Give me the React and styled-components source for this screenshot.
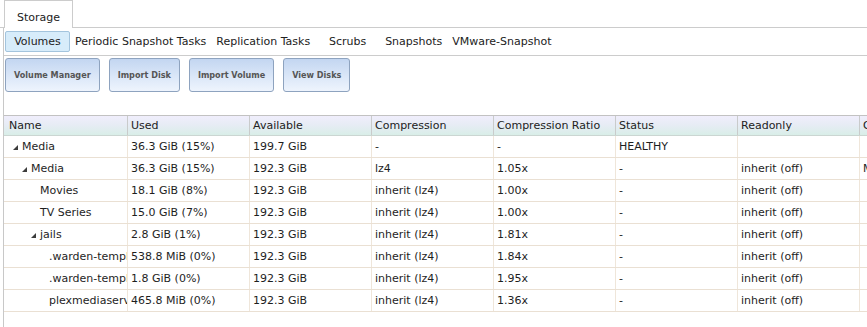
import React from "react";
import styled, { createGlobalStyle, css } from "styled-components";

const Global = createGlobalStyle`
  html, body { margin: 0; padding: 0; background: #ffffff; }
  body { font-family: "DejaVu Sans", Verdana, sans-serif; font-size: 11px; color: #222; }
  * { box-sizing: border-box; }
`;

const Page = styled.div`
  height: 100vh;
  display: flex;
  flex-direction: column;
  overflow: hidden;
`;

const TopBar = styled.div`
  height: 28px;
  display: flex;
  align-items: flex-end;
  padding-left: 4px;
  border-bottom: 1px solid #cccccc;
`;

const TopTab = styled.div`
  width: 69px;
  height: 28px;
  margin-bottom: -1px;
  padding-top: 7px;
  line-height: 20px;
  text-align: center;
  background: #ffffff;
  border: 1px solid #cccccc;
  border-bottom: none;
  color: #222;
`;

const Pane = styled.div`
  flex: 1;
  margin-left: 3px;
  border-left: 1px solid #c8c8c8;
  display: flex;
  flex-direction: column;
`;

const SubTabs = styled.div`
  height: 28px;
  display: flex;
  align-items: center;
  padding-left: 1px;
  border-bottom: 1px solid #cccccc;
`;

const SubTab = styled.div`
  min-width: 65px;
  height: 21px;
  padding: 0 4px;
  line-height: 19px;
  text-align: center;
  white-space: nowrap;
  color: #222;
  border: 1px solid transparent;
  border-radius: 2px;
  ${(p) =>
    p.$active &&
    css`
      background: #d7ecfa;
      border-color: #a3c4dd;
    `}
`;

const Toolbar = styled.div`
  display: flex;
  gap: 9px;
  padding: 2px 0 0 1px;
`;

const ActionButton = styled.button`
  height: 34px;
  padding: 0 8px;
  border: 1px solid #8ea3bf;
  border-radius: 3px;
  background: linear-gradient(to bottom, #c3d6f1 0%, #dbe7f8 55%, #eef4fd 100%);
  font-family: "DejaVu Sans Condensed", "DejaVu Sans", sans-serif;
  font-weight: bold;
  font-size: 9px;
  color: #555;
  white-space: nowrap;
`;

const GridArea = styled.div`
  flex: 1;
  padding-top: 23px;
`;

const COLS = "124px repeat(7, 122px)";

const HeaderRow = styled.div`
  display: grid;
  grid-template-columns: ${COLS};
  height: 21px;
  border-top: 1px solid #c2c2c2;
  border-bottom: 1px solid #cbd6d2;
  background: linear-gradient(to bottom, #f0eefc 0%, #e6ecf4 50%, #d9eee8 100%);
`;

const HeaderCell = styled.div`
  padding: 0 0 0 ${(p) => (p.$first ? 5 : 3)}px;
  line-height: 19px;
  border-right: 1px solid #c9cbcb;
  white-space: nowrap;
  overflow: hidden;
  color: #222;
`;

const DataRow = styled.div`
  display: grid;
  grid-template-columns: ${COLS};
  height: 22px;
  border-bottom: 1px solid #eae0d3;
`;

const Cell = styled.div`
  padding-left: 3px;
  line-height: 21px;
  border-right: 1px solid #efe6da;
  white-space: nowrap;
  overflow: hidden;
  color: #1e1e1e;
`;

const NameCell = styled(Cell)`
  display: flex;
  align-items: center;
  padding-left: ${(p) => 9 + p.$level * 9}px;
`;

const Expander = styled.span`
  width: 9px;
  flex-shrink: 0;
  display: flex;
  align-items: center;
  padding-top: 1px;
`;

const Triangle = () => (
  <svg width="5" height="5" viewBox="0 0 5 5">
    <polygon points="5,0 5,5 0,5" fill="#3c3c3c" />
  </svg>
);

const subTabs = [
  "Volumes",
  "Periodic Snapshot Tasks",
  "Replication Tasks",
  "Scrubs",
  "Snapshots",
  "VMware-Snapshot",
];

const buttons = ["Volume Manager", "Import Disk", "Import Volume", "View Disks"];

const headers = [
  "Name",
  "Used",
  "Available",
  "Compression",
  "Compression Ratio",
  "Status",
  "Readonly",
  "Comments",
];

const rows = [
  { level: 0, exp: true, name: "Media", used: "36.3 GiB (15%)", avail: "199.7 GiB", comp: "-", ratio: "-", status: "HEALTHY", ro: "", extra: "" },
  { level: 1, exp: true, name: "Media", used: "36.3 GiB (15%)", avail: "192.3 GiB", comp: "lz4", ratio: "1.05x", status: "-", ro: "inherit (off)", extra: "Media" },
  { level: 2, name: "Movies", used: "18.1 GiB (8%)", avail: "192.3 GiB", comp: "inherit (lz4)", ratio: "1.00x", status: "-", ro: "inherit (off)", extra: "" },
  { level: 2, name: "TV Series", used: "15.0 GiB (7%)", avail: "192.3 GiB", comp: "inherit (lz4)", ratio: "1.00x", status: "-", ro: "inherit (off)", extra: "" },
  { level: 2, exp: true, name: "jails", used: "2.8 GiB (1%)", avail: "192.3 GiB", comp: "inherit (lz4)", ratio: "1.81x", status: "-", ro: "inherit (off)", extra: "" },
  { level: 3, name: ".warden-template-pluginjail", used: "538.8 MiB (0%)", avail: "192.3 GiB", comp: "inherit (lz4)", ratio: "1.84x", status: "-", ro: "inherit (off)", extra: "" },
  { level: 3, name: ".warden-template-standard", used: "1.8 GiB (0%)", avail: "192.3 GiB", comp: "inherit (lz4)", ratio: "1.95x", status: "-", ro: "inherit (off)", extra: "" },
  { level: 3, name: "plexmediaserver_1", used: "465.8 MiB (0%)", avail: "192.3 GiB", comp: "inherit (lz4)", ratio: "1.36x", status: "-", ro: "inherit (off)", extra: "" },
];

export default function App() {
  return (
    <Page>
      <Global />
      <TopBar>
        <TopTab>Storage</TopTab>
      </TopBar>
      <Pane>
        <SubTabs>
          {subTabs.map((t, i) => (
            <SubTab key={t} $active={i === 0}>
              {t}
            </SubTab>
          ))}
        </SubTabs>
        <Toolbar>
          {buttons.map((b) => (
            <ActionButton key={b}>{b}</ActionButton>
          ))}
        </Toolbar>
        <GridArea>
          <HeaderRow>
            {headers.map((h, i) => (
              <HeaderCell key={h} $first={i === 0}>
                {h}
              </HeaderCell>
            ))}
          </HeaderRow>
          {rows.map((r, i) => (
            <DataRow key={i}>
              <NameCell $level={r.level}>
                <Expander>{r.exp ? <Triangle /> : null}</Expander>
                {r.name}
              </NameCell>
              <Cell>{r.used}</Cell>
              <Cell>{r.avail}</Cell>
              <Cell>{r.comp}</Cell>
              <Cell>{r.ratio}</Cell>
              <Cell>{r.status}</Cell>
              <Cell>{r.ro}</Cell>
              <Cell>{r.extra}</Cell>
            </DataRow>
          ))}
        </GridArea>
      </Pane>
    </Page>
  );
}
